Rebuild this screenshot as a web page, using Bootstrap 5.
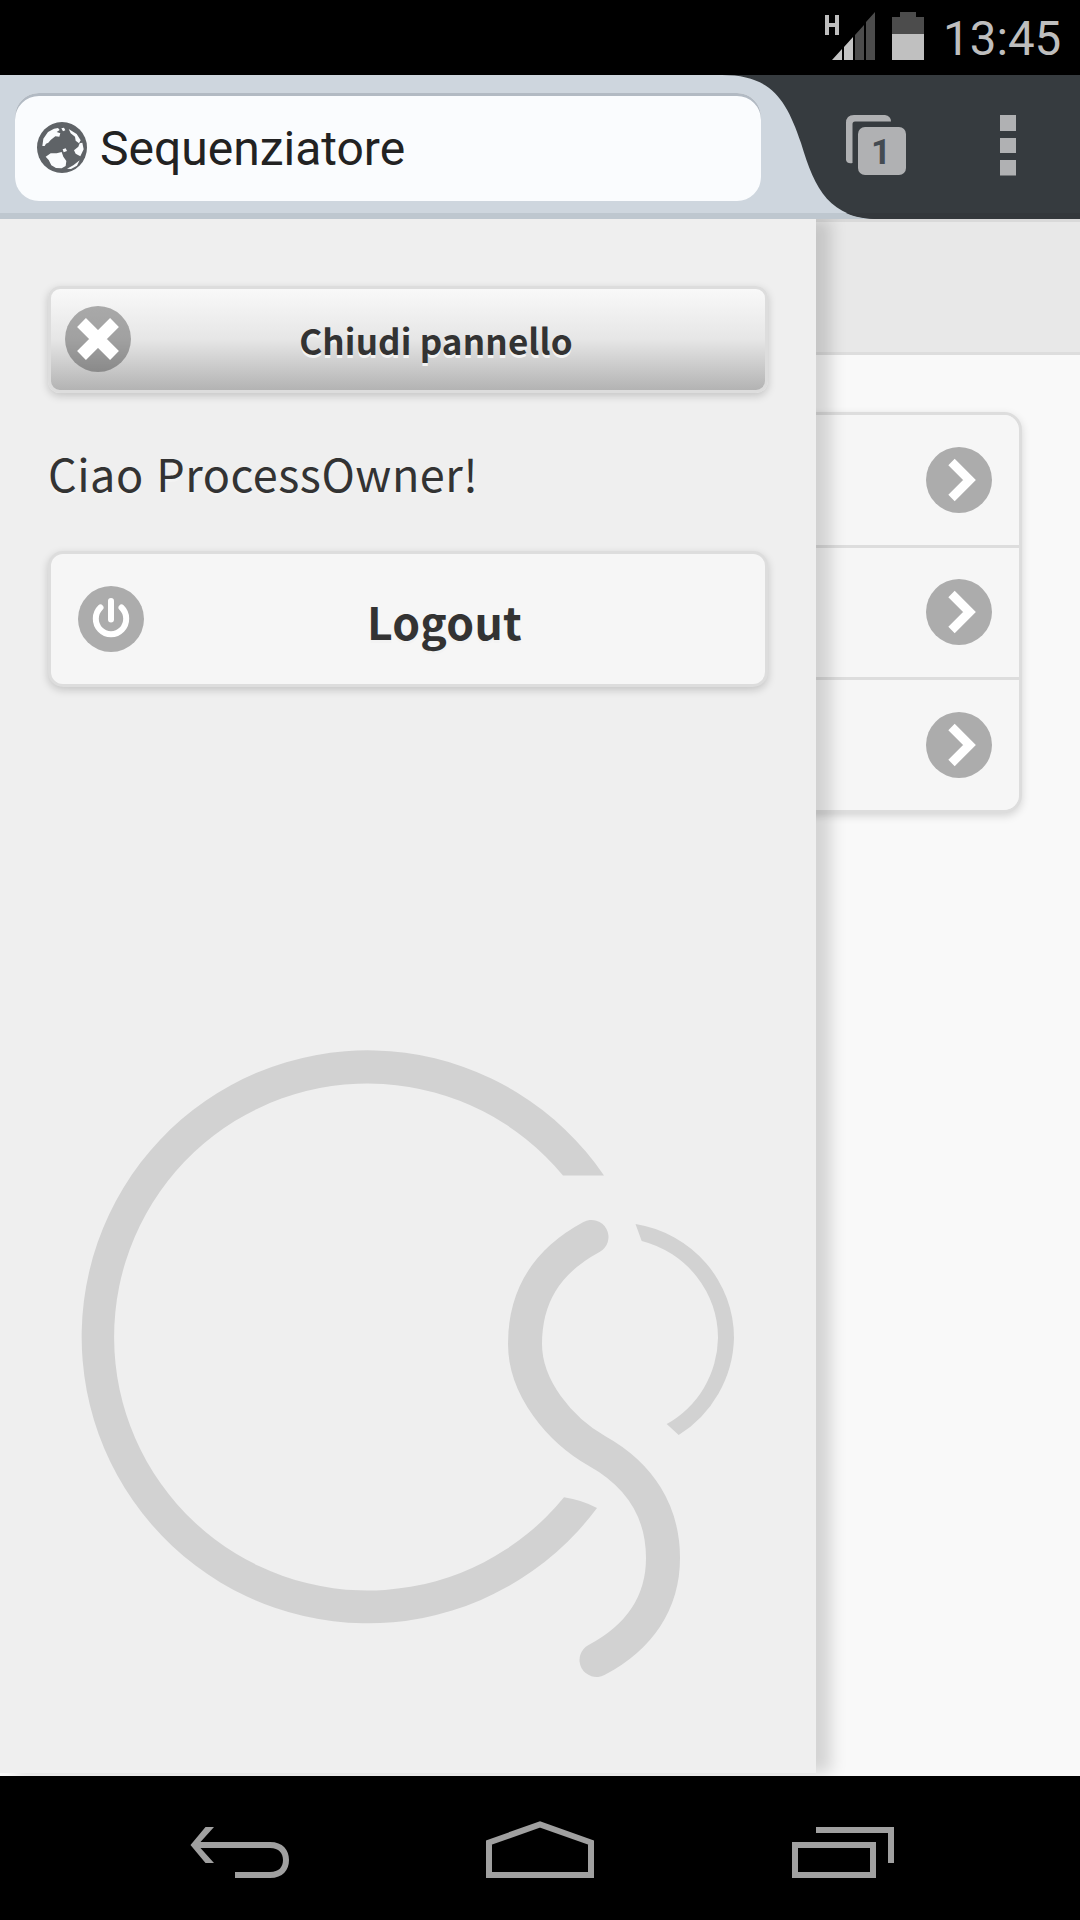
<!DOCTYPE html>
<html lang="it">
<head>
<meta charset="utf-8">
<meta name="viewport" content="width=device-width, initial-scale=1">
<title>Sequenziatore</title>
<link rel="stylesheet" href="https://cdn.jsdelivr.net/npm/bootstrap@5.3.0/dist/css/bootstrap.min.css">
<style>
html,body{height:100%;overflow:hidden}
body{font-family:"Noto Sans CJK SC","Noto Sans",sans-serif;color:#333;background:#000}
svg{display:block;flex:none}
.screen{width:1080px;height:1920px}
.statusbar{height:75px;background:#000;padding-right:20px}
.clock{font:400 47.5px/79px Roboto,sans-serif;color:#bebebe;width:117px;margin-left:19px;white-space:nowrap}
.toolbar{height:144px;background:#363b3f;z-index:3}
.tabshape{left:0;top:0}
.omnibox{width:746px;height:108px;margin:18px 0 0 15px;border-radius:24px;background:#fafcfe;box-shadow:inset 0 3px 0 #b2bac3;padding-left:22px;font:400 48px/108px Roboto,sans-serif;color:#222}
.omnibox span{margin-left:13px;padding-top:4px}
.page-area{height:1557px;background:#f9f9f9}
.page-head{height:136px;background:#e8e8e8;border-top:3px solid #d9d9d9;border-bottom:3px solid #ddd}
.menu{margin:57px 58px 0 58px;border:3px solid #ddd;border-radius:18px;box-shadow:0 3px 9px rgba(0,0,0,.15);background:#f6f6f6;overflow:hidden}
.menu .list-group-item{height:132.5px;background:#f6f6f6;border:0;border-bottom:3px solid #ddd;border-radius:0;padding:0 27px 0 0}
.menu .list-group-item:last-child{height:130px;border-bottom:0}
.side{left:0;top:0;width:816px;height:1554px;background:#efefef;box-shadow:15px 0 15px rgba(0,0,0,.15);padding:67px 48px 0;z-index:2}
.pbtn{width:720px;border:3px solid #ddd;box-shadow:0 3px 9px rgba(0,0,0,.18);font-weight:700;text-shadow:0 3px 0 #f3f3f3;color:#333}
.pbtn:hover{color:#333}
.b-close{height:107px;border-radius:12px;background:linear-gradient(#f9f9f9 0,#e6e6e6 50%,#b3b3b3 100%);font-size:35px;letter-spacing:.15px;padding:0 24px 0 14px}
.b-out{height:136px;border-radius:15px;background:#f6f6f6;font-size:44.5px;letter-spacing:.25px;padding:0 20px 0 27px}
.b-close span{padding-top:2px}
.b-out span{padding-top:4px}
.hello{font-size:45px;line-height:60px;margin:0;padding:50px 0 48px 0;letter-spacing:.5px;word-spacing:2px;text-shadow:0 3px 0 #f3f3f3;white-space:nowrap}
.logo{margin:357px 0 0 32px}
.navbar-sys{height:144px;background:#000}
</style>
<script src="https://cdn.jsdelivr.net/npm/bootstrap@5.3.0/dist/js/bootstrap.bundle.min.js"></script>
</head>
<body>
<svg width="0" height="0" class="position-absolute">
  <symbol id="go" viewBox="0 0 66 66"><circle cx="33" cy="33" r="33" fill="#acacac"/><path d="M25.500 15L43.500 33L25.500 51" fill="none" stroke="#fff" stroke-width="9"/></symbol>
</svg>
<div class="screen d-flex flex-column">
  <div class="statusbar d-flex justify-content-end">
    <svg width="102" height="75" viewBox="822 0 102 75" aria-label="HSPA, batteria">
      <path d="M827 15V35M837 15V35M827 25H837" stroke="#bebebe" stroke-width="4" fill="none"/>
      <path d="M832 60L842 49V60ZM844 60V47L853 37V60Z" fill="#c4c4c4"/>
      <path d="M855 60V35L864 25V60ZM866 60V22L875 12V60Z" fill="#4c4c4c"/>
      <path d="M892 34V17H900V12H916V17H924V34Z" fill="#4c4c4c"/><path d="M892 34H924V60H892Z" fill="#c0c0c0"/>
    </svg>
    <div class="clock">13:45</div>
  </div>
  <header class="toolbar position-relative">
    <svg class="tabshape position-absolute" width="1080" height="144" viewBox="0 75 1080 144">
      <path d="M0 75H722C770 75 786 98 801 143C815 190 830 219 880 219H0Z" fill="#ced6de"/>
      <path d="M0 213H846C855 217 865 219 880 219H0Z" fill="#bec7cf"/><path d="M846 213H1080V219H880C865 219 855 217 846 213Z" fill="#33373b"/>
    </svg>
    <div class="d-flex position-relative">
      <div class="omnibox d-flex align-items-center">
        <svg width="50" height="51" viewBox="21 18 150 153">
          <ellipse cx="96" cy="94.500" rx="75" ry="76.500" fill="#5f6367"/>
          <g fill="#fafcfe">
            <path d="M37 90L40 68L54 48L72 38L84 36L89 42L80 48L91 52L88 62L76 61L62 72L55 80L48 83L44 90Z"/>
            <path d="M94 37L102 35L106 43L99 46ZM98 100L107 97L111 105L101 109Z"/>
            <path d="M116 39L140 54L152 73L147 82L137 74L135 62L122 52Z"/>
            <path d="M157 80L161 100L151 121L137 113L132 103L145 92L149 82Z"/>
            <path d="M47 122L62 112L80 112L95 108L100 122L109 135L107 150L95 157L78 156L64 148L56 132Z"/>
            <path d="M111 158L130 148L149 133L141 149L123 159Z"/>
          </g>
        </svg>
        <span>Sequenziatore</span>
      </div>
      <svg class="ms-auto" width="240" height="144" viewBox="840 75 240 144">
        <path d="M846 160V123Q846 115 854 115H885Q891 116 891 121.500H855Q852.500 121.500 852.500 124V163Q847 164 846 160Z" fill="#b0b1b3"/>
        <rect x="858" y="127" width="48" height="48" rx="7" fill="#b0b1b3"/>
        <text x="881" y="164" text-anchor="middle" font-family="Roboto" font-weight="700" font-size="35" fill="#444b52">1</text>
        <path d="M1000 115H1016V131H1000ZM1000 138H1016V153H1000ZM1000 160H1016V175.500H1000Z" fill="#b0b1b3"/>
      </svg>
    </div>
  </header>
  <main class="page-area position-relative">
    <div class="page-head"></div>
    <div class="menu list-group">
      <a class="list-group-item d-flex align-items-center justify-content-end"><svg width="66" height="66"><use href="#go"/></svg></a>
      <a class="list-group-item d-flex align-items-center justify-content-end"><svg width="66" height="66"><use href="#go"/></svg></a>
      <a class="list-group-item d-flex align-items-center justify-content-end"><svg width="66" height="66"><use href="#go"/></svg></a>
    </div>
    <aside class="side position-absolute">
      <a class="btn pbtn b-close d-flex align-items-center">
        <svg width="66" height="67" viewBox="0 0 66 67"><circle cx="33" cy="33" r="33" fill="#000" fill-opacity=".3"/><path d="M16.500 16.500L49.500 49.500M49.500 16.500L16.500 49.500" stroke="#fff" stroke-width="12.500"/></svg>
        <span class="flex-fill text-center">Chiudi pannello</span>
      </a>
      <p class="hello">Ciao ProcessOwner!</p>
      <a class="btn pbtn b-out d-flex align-items-center">
        <svg width="66" height="66" viewBox="0 0 66 66"><circle cx="33" cy="33" r="33" fill="#acacac"/><path d="M33 15V33.500M22.500 21.500A15.200 15.500 0 1 0 43.500 21.500" fill="none" stroke="#fff" stroke-width="6" stroke-linecap="round"/></svg>
        <span class="flex-fill text-center">Logout</span>
      </a>
      <svg class="logo" width="660" height="640" viewBox="80 1044 660 640">
        <path d="M604 1175.500H563A253.500 253.500 0 1 0 564 1497.300Q582 1500 597 1508A286 286.500 0 1 1 604 1175.500Z" fill="#d2d2d2"/>
        <path d="M591.500 1237C545 1262 525 1298 525 1344C525 1388 560 1430 597 1451C640 1475 663 1512 663 1558C663 1602 640 1637 596.500 1660" fill="none" stroke="#d2d2d2" stroke-width="34" stroke-linecap="round"/>
        <path d="M635.500 1224A118 115.500 0 0 1 734 1338A118 118 0 0 1 678.700 1435L666.700 1424A100 100 0 0 0 718 1338A102 100 0 0 0 641.700 1241Z" fill="#d2d2d2"/>
      </svg>
    </aside>
  </main>
  <nav class="navbar-sys">
    <svg width="1080" height="144" viewBox="0 1776 1080 144" fill="none" stroke="#a0a0a0" stroke-width="6">
      <path d="M190.500 1845L205.500 1827H214L200.500 1842H270C283 1842 289 1850 289 1860C289 1870 283 1878 270 1878H235V1872H270C279 1872 283 1867 283 1860C283 1853 279 1848 270 1848H200.500L214 1863H205.500Z" fill="#a0a0a0" stroke="none"/>
      <path d="M489 1842.500L540 1824.500L591 1842.500V1875H489Z"/>
      <path d="M795 1845H873V1875H795ZM816 1830H891V1863"/>
    </svg>
  </nav>
</div>
</body>
</html>
